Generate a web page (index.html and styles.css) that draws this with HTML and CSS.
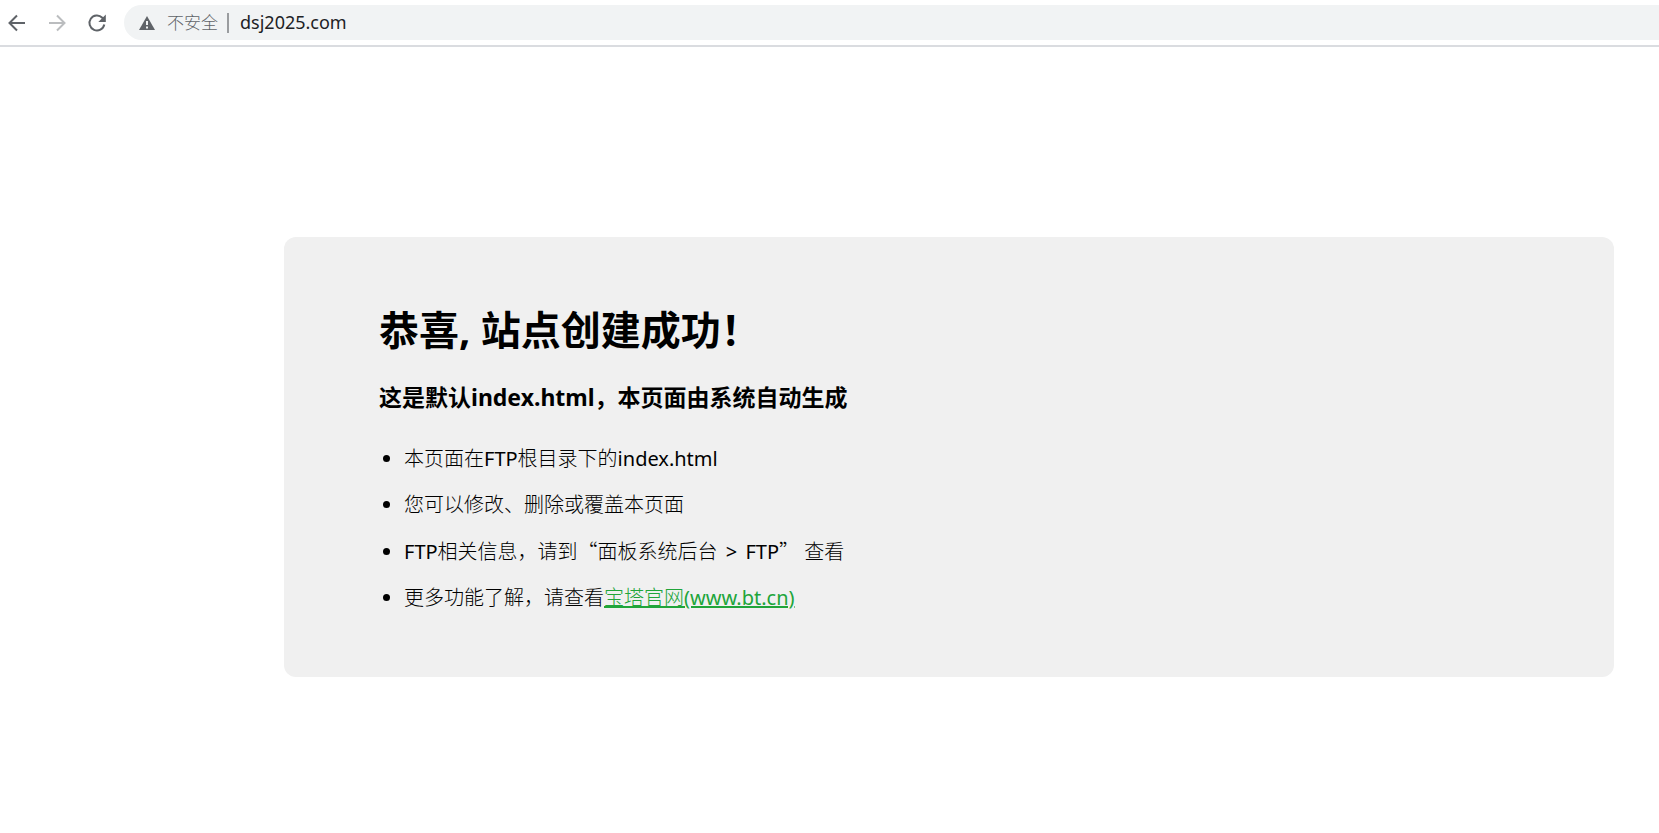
FILE: index.html
```html
<!DOCTYPE html>
<html lang="zh-CN">
<head>
<meta charset="utf-8">
<title>恭喜，站点创建成功！</title>
<link rel="stylesheet" href="styles.css">
</head>
<body>
<header class="toolbar">
  <button class="nav-button" type="button" aria-label="后退">
    <svg class="icon" viewBox="0 0 20 20"><path d="M18 10H2.500M10 2.500L2.500 10L10 17.500"/></svg>
  </button>
  <button class="nav-button nav-disabled" type="button" aria-label="前进" disabled>
    <svg class="icon" viewBox="0 0 20 20"><path d="M2 10H17.500M10 2.500L17.500 10L10 17.500"/></svg>
  </button>
  <button class="nav-button" type="button" aria-label="重新加载">
    <svg class="icon" viewBox="0 0 20 20"><path d="M17.300 11.500A7.500 7.500 0 1 1 15.300 4.700L17 6.500"/><path class="solid" d="M18.800 1.500V9H11.300Z"/></svg>
  </button>
  <div class="address">
    <svg class="warning" viewBox="0 0 16 14"><path fill="#5f6368" d="M8 0L16 14H0Z"/><path fill="#f1f3f4" d="M7 5h2v4H7zM7 10.500h2v2H7z"/></svg>
    <label class="security" for="url">不安全</label>
    <input class="url" id="url" type="text" value="dsj2025.com">
  </div>
</header>
<main class="page">
  <section class="card">
    <h1 class="title">恭喜, 站点创建成功！</h1>
    <h3 class="subtitle">这是默认index.html，本页面由系统自动生成</h3>
    <ul class="notes">
      <li>本页面在<span class="latin">FTP</span>根目录下的<span class="latin">index.html</span></li>
      <li>您可以修改、删除或覆盖本页面</li>
      <li><span class="latin">FTP</span>相关信息，请到<span class="quote">“</span>面板系统后台<span class="latin"> <span class="arrow">&gt;</span> FTP</span><span class="quote">”</span> 查看</li>
      <li>更多功能了解，请查看<a class="link" href="#">宝塔官网<span class="latin">(www.bt.cn)</span></a></li>
    </ul>
  </section>
</main>
</body>
</html>
```

FILE: styles.css
```css
* {
  box-sizing: border-box;
}

body {
  margin: 0;
  background: #fff;
  color: #000;
  font-family: "Noto Sans", "Noto Sans CJK SC", sans-serif;
}

.toolbar {
  display: flex;
  align-items: center;
  height: 47px;
  padding-left: 7px;
  border-bottom: 2px solid #dadce0;
}

.nav-button {
  display: flex;
  width: 20px;
  height: 20px;
  margin-right: 20px;
  padding: 0;
  border: 0;
  background: none;
  color: #5f6368;
}

.nav-disabled {
  color: #bbbdbf;
}

.icon {
  width: 20px;
  height: 20px;
  fill: none;
  stroke: currentColor;
  stroke-width: 2;
}

.icon .solid {
  fill: currentColor;
  stroke: none;
}

.address {
  display: flex;
  flex: 1;
  align-items: center;
  height: 35px;
  margin-left: -3px;
  padding-left: 15px;
  border-radius: 18px 0 0 18px;
  background: #f1f3f4;
}

.warning {
  width: 16px;
  height: 14px;
  margin-right: 12px;
}

.security {
  padding-right: 9px;
  border-right: 2px solid #9a9c9f;
  color: #5f6368;
  font-size: 17px;
  font-weight: 300;
  line-height: 20px;
}

.url {
  flex: 1;
  min-width: 0;
  padding: 0 0 2px 11px;
  border: 0;
  outline: 0;
  background: none;
  color: #202124;
  font-family: inherit;
  font-size: 18px;
  line-height: 24px;
}

.page {
  padding: 190px 45px 40px 284px;
}

.card {
  padding: 38px 95px;
  border-radius: 12px;
  background: #f0f0f0;
}

.title {
  margin: 28px 0 26px;
  font-size: 40px;
  line-height: 53px;
}

.subtitle {
  margin: 0 0 23px;
  font-size: 23px;
  line-height: 31px;
}

.notes {
  margin: 0 0 18px;
  padding-left: 25px;
  font-size: 20px;
  font-weight: 300;
  line-height: 46px;
}

.latin {
  font-weight: 400;
}

.arrow {
  margin: 0 3px;
}

.quote {
  font-family: "Noto Sans CJK SC", sans-serif;
}

.link {
  color: #20a53a;
  text-decoration-thickness: 2px;
}
```
